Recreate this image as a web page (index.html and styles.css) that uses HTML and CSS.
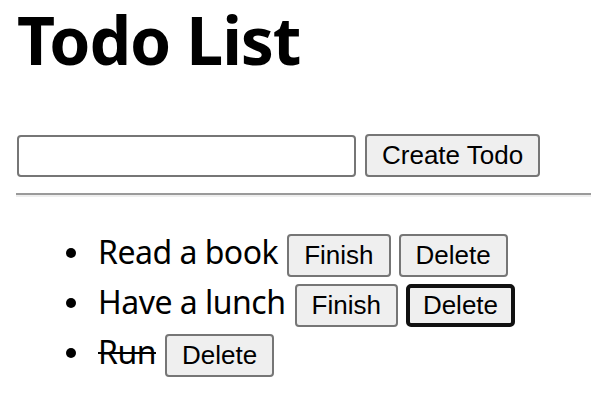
FILE: index.html
```html
<!DOCTYPE html>
<html>
<head>
<meta charset="utf-8">
<title>Todo List</title>
<link rel="stylesheet" href="styles.css">
</head>
<body>
<div class="app">
  <h1 class="title">Todo List</h1>
  <div class="create-row">
    <input class="todo-input" type="text">
    <button class="btn">Create Todo</button>
  </div>
  <hr class="divider">
  <ul class="todo-list">
    <li class="todo-item"><span class="todo-text">Read a book</span><button class="btn">Finish</button><button class="btn">Delete</button></li>
    <li class="todo-item"><span class="todo-text">Have a lunch</span><button class="btn">Finish</button><button class="btn btn-focused">Delete</button></li>
    <li class="todo-item"><span class="todo-text todo-done">Run</span><button class="btn">Delete</button></li>
  </ul>
</div>
</body>
</html>
```

FILE: styles.css
```css
body {
  margin: 0;
  background: #ffffff;
  color: #000000;
  font-family: "Noto Sans", "Open Sans", sans-serif;
}

.app {
  padding: 14px 0 0 16px;
}

.title {
  margin: 0;
  padding-left: 1px;
  font-size: 66px;
  line-height: 50px;
  font-weight: 700;
  letter-spacing: -1.1px;
}

.create-row {
  display: flex;
  align-items: center;
  gap: 9px;
  margin-top: 70px;
  padding-left: 1px;
}

.todo-input {
  box-sizing: border-box;
  width: 339px;
  height: 42px;
  margin: 0;
  padding: 0 4px;
  border: 2px solid #767676;
  border-radius: 4px;
  background: #ffffff;
}

.btn {
  margin: 0;
  padding: 4px 15px;
  border: 2px solid #767676;
  border-radius: 4px;
  background: #efefef;
  color: #000000;
  font-family: "Liberation Sans", Arial, sans-serif;
  font-size: 26px;
  line-height: normal;
}

.btn-focused {
  border: 4px solid #111111;
  border-radius: 5px;
  padding: 2px 13px;
}

.divider {
  margin: 16px 0 0 0;
  height: 0;
  border: 0;
  border-top: 2px solid #9a9a9a;
  border-bottom: 2px solid #eeeeee;
}

.todo-list {
  list-style: none;
  margin: 33px 0 0 0;
  padding: 0;
}

.todo-item {
  display: flex;
  align-items: baseline;
  gap: 8px;
  height: 50px;
  font-size: 32px;
  letter-spacing: -0.5px;
}

.todo-item::before {
  content: "";
  align-self: center;
  width: 10px;
  height: 10px;
  margin: 0 14px 4px 50px;
  border-radius: 50%;
  background: #000000;
}

.todo-text {
  margin-right: 1px;
}

.todo-done {
  text-decoration: line-through;
  text-decoration-thickness: 2px;
}
```
